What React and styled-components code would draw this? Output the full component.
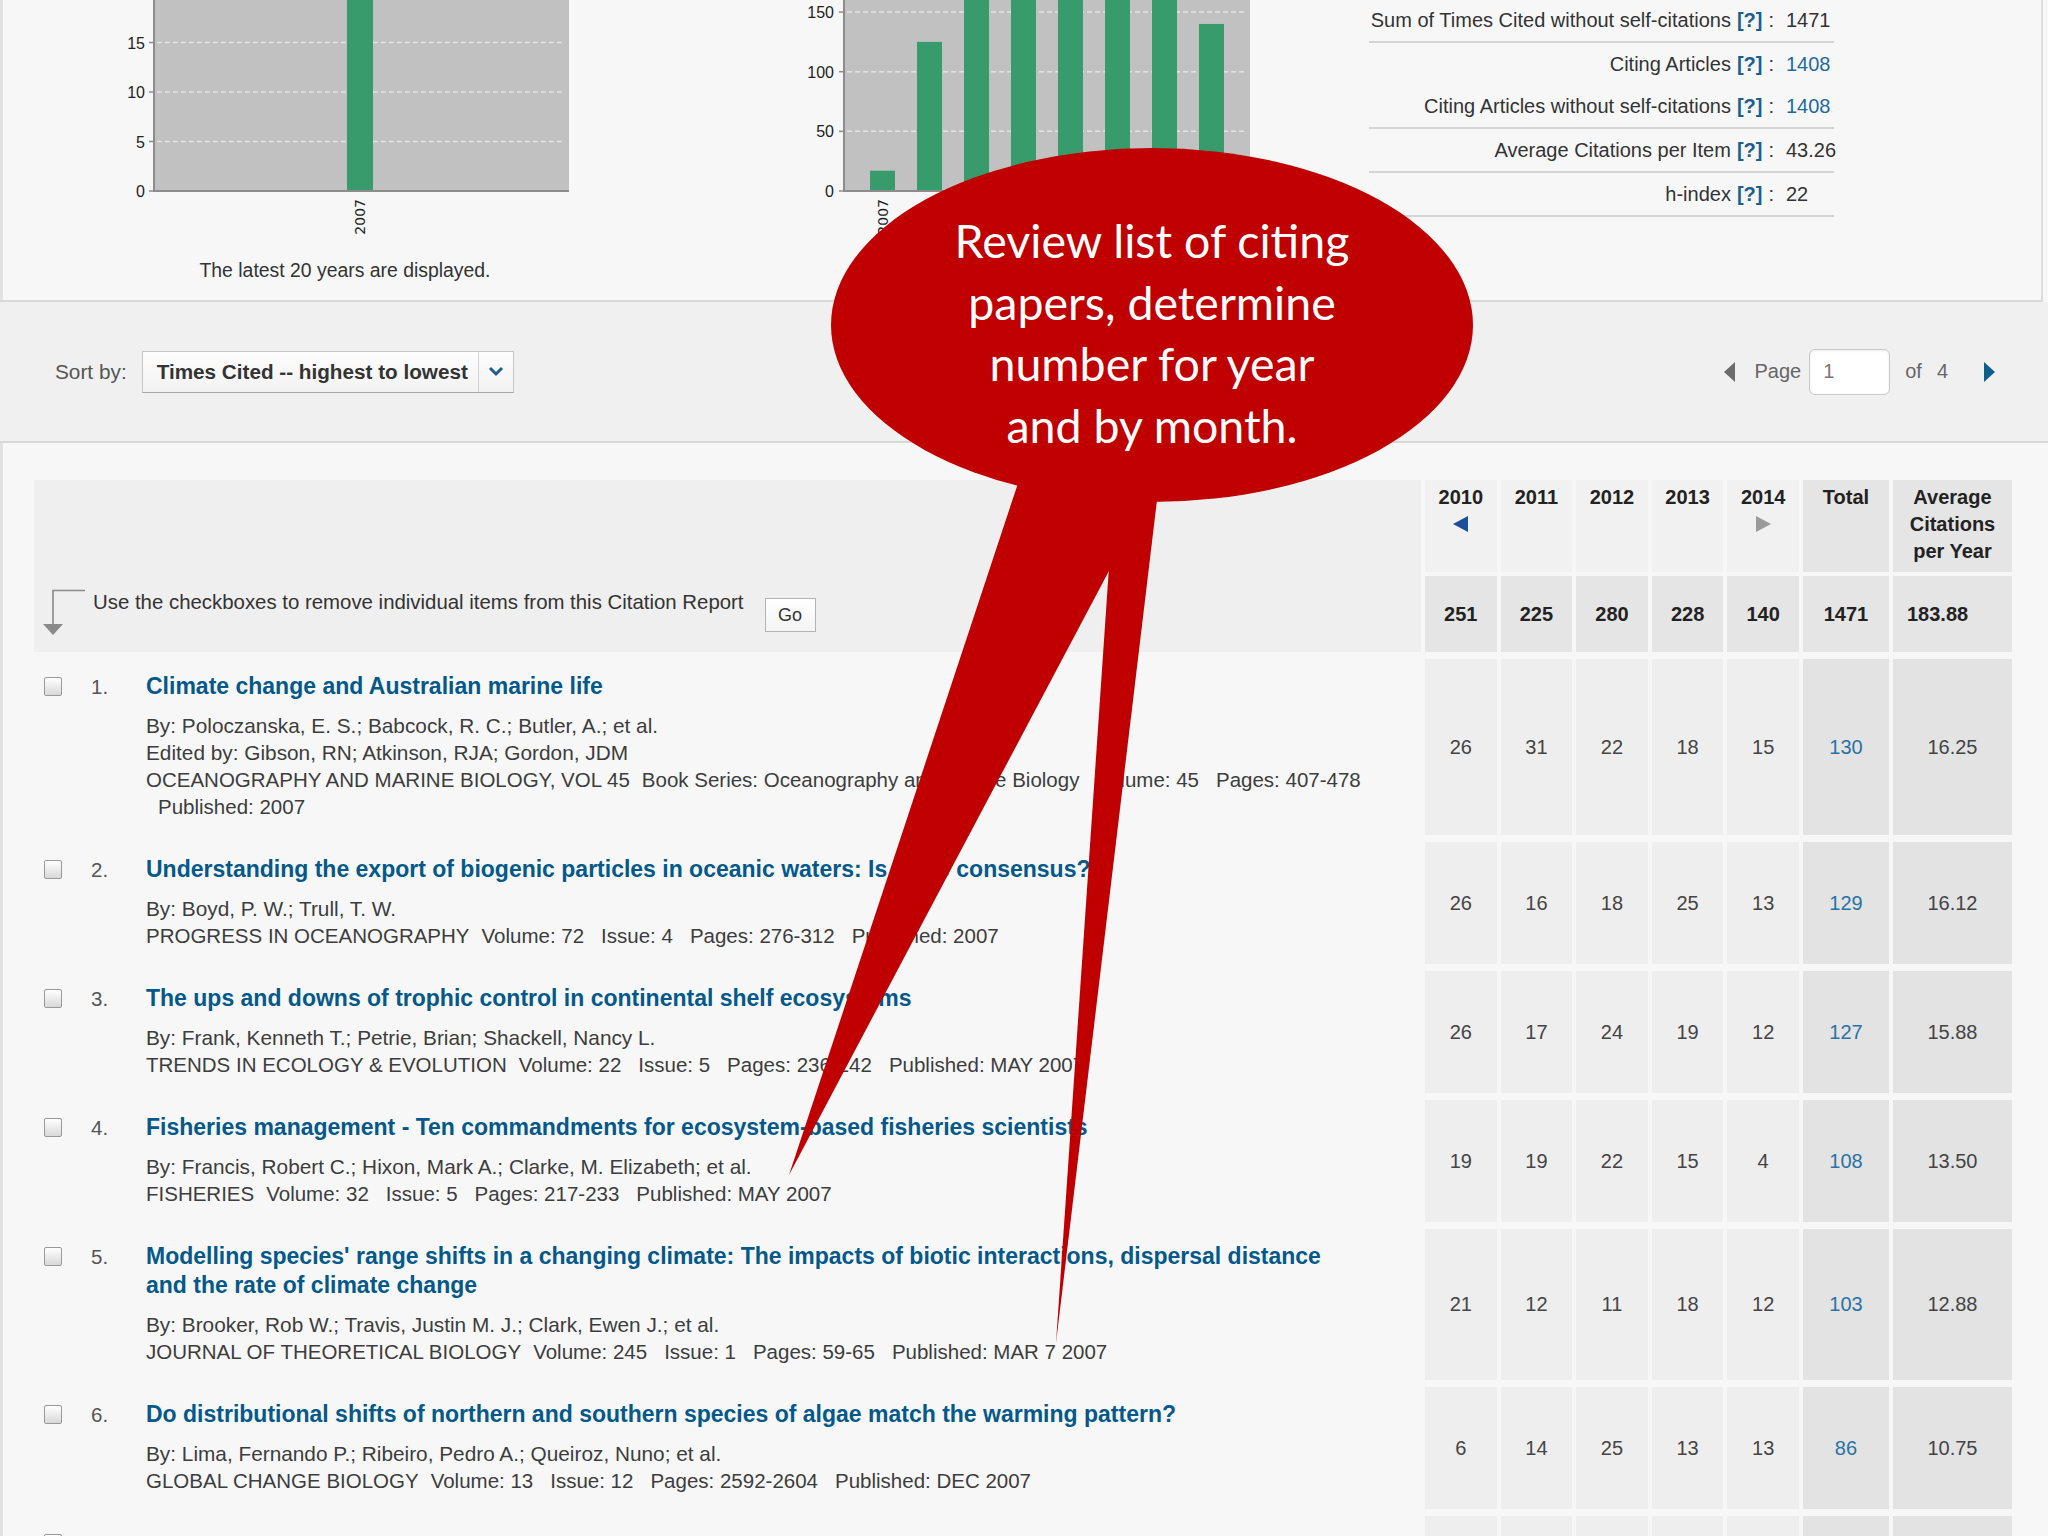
import React from "react";
import styled, { createGlobalStyle } from "styled-components";

const FONT = `"Liberation Sans", Arial, Helvetica, sans-serif`;

const GlobalStyle = createGlobalStyle`
  html, body { margin: 0; padding: 0; }
  body { background: #f7f7f8; font-family: ${FONT}; color: #3d3d3d; }
  * { box-sizing: border-box; }
`;

const Page = styled.div`
  position: relative;
  width: 2048px;
  height: 1536px;
  overflow: hidden;
  background: #f7f7f8;
  box-shadow: inset 3px 0 0 #e2e2e2;
`;

/* ---------- top panel ---------- */
const TopPanel = styled.section`
  display: flex;
  height: 302px;
  margin-right: 5px;
  border-bottom: 2px solid #d8d8d8;
  border-right: 2px solid #dcdcdc;
`;

const ChartBlock = styled.div`
  display: flex;
  flex-direction: column;
  width: ${(p) => p.$w}px;
  flex: none;
`;

const ChartSvg = styled.svg`
  display: block;
  overflow: hidden;
`;

const Caption = styled.div`
  width: 690px;
  margin-top: 5px;
  text-align: center;
  font-size: 19.4px;
  line-height: 30px;
  color: #333;
`;

const Stats = styled.div`
  width: 465px;
  margin-left: 29px;
  margin-top: -1px;
  flex: none;
`;

const StatGroup = styled.div`
  border-bottom: 2px solid #d4d4d4;
`;

const StatRow = styled.div`
  display: flex;
  align-items: center;
  justify-content: flex-end;
  height: 42px;
  font-size: 20px;
  color: #333;
  white-space: nowrap;
`;

const Help = styled.span`
  margin-left: 6px;
  font-weight: 700;
  color: #1b5f8e;
`;

const Colon = styled.span`
  margin-left: 6px;
`;

const StatValue = styled.span`
  width: 48px;
  margin-left: 12px;
  color: ${(p) => (p.$link ? "#1d6aa0" : "#333")};
`;

/* ---------- sort band ---------- */
const SortBand = styled.div`
  display: flex;
  align-items: center;
  height: 141px;
  padding: 0 53px 0 55px;
  background: #f0f0f1;
  border-bottom: 2px solid #d8d8d8;
`;

const SortLabel = styled.span`
  font-size: 20.8px;
  color: #555;
  margin-right: 15px;
`;

const Select = styled.div`
  display: flex;
  width: 372px;
  height: 42px;
  border: 1px solid #c6c6c6;
  border-bottom-color: #a9a9a9;
  background: linear-gradient(#fdfdfd, #f2f2f2);
`;

const SelectValue = styled.span`
  flex: 1;
  padding-left: 14px;
  font-size: 20.7px;
  font-weight: 700;
  line-height: 40px;
  color: #333;
  white-space: nowrap;
`;

const SelectButton = styled.span`
  display: flex;
  align-items: center;
  justify-content: center;
  width: 35px;
  border-left: 1px solid #d2d2d2;
`;

const Pager = styled.div`
  display: flex;
  align-items: center;
  margin-left: auto;
  font-size: 20px;
  color: #666;
`;

const Tri = styled.span`
  width: 0;
  height: 0;
  border-top: 10px solid transparent;
  border-bottom: 10px solid transparent;
  ${(p) =>
    p.$dir === "left"
      ? `border-right: 11px solid ${p.$color};`
      : `border-left: 11px solid ${p.$color};`}
  margin-left: ${(p) => p.$ml || 0}px;
`;

const PagerText = styled.span`
  margin-left: ${(p) => p.$ml}px;
`;

const PageInput = styled.input`
  margin-left: 8px;
  width: 81px;
  height: 46px;
  padding: 0 0 0 13px;
  border: 1px solid #c9c9c9;
  border-radius: 6px;
  background: #fff;
  box-shadow: inset 0 1px 3px rgba(0, 0, 0, 0.08);
  font-family: ${FONT};
  font-size: 20px;
  color: #777;
  outline: none;
`;

/* ---------- table ---------- */
const TableSection = styled.div`
  padding: 37px 0 0 34px;
`;

const COLS = "1387px repeat(5, 71.6px) 86px 119px";

const HeaderGrid = styled.div`
  display: grid;
  grid-template-columns: ${COLS};
  grid-template-rows: 92px 76px;
  gap: 4px;
`;

const HeaderLead = styled.div`
  grid-row: 1 / span 2;
  display: flex;
  align-items: flex-start;
  padding: 109px 0 0 8px;
  background: #efefef;
`;

const LeadText = styled.span`
  margin-left: 7px;
  font-size: 20.4px;
  line-height: 26px;
  color: #333;
  white-space: nowrap;
`;

const GoButton = styled.button`
  margin: 9px 0 0 21px;
  width: 51px;
  height: 34px;
  padding: 0;
  border: 1px solid #b3b3b3;
  background: linear-gradient(#ffffff, #f4f4f4);
  font-family: ${FONT};
  font-size: 18px;
  color: #333;
`;

const HeadCell = styled.div`
  display: flex;
  flex-direction: column;
  align-items: center;
  padding-top: 4px;
  background: ${(p) => (p.$dark ? "#e5e5e5" : "#f1f1f1")};
  font-size: 20px;
  font-weight: 700;
  line-height: 27px;
  color: #222;
  text-align: center;
`;

const HeadArrow = styled.span`
  margin-top: 5px;
  width: 0;
  height: 0;
  border-top: 8px solid transparent;
  border-bottom: 8px solid transparent;
  ${(p) =>
    p.$dir === "left"
      ? `border-right: 15px solid #1a4f9c;`
      : `border-left: 15px solid #9a9a9a;`}
`;

const TotalCell = styled.div`
  display: flex;
  align-items: center;
  justify-content: ${(p) => (p.$left ? "flex-start" : "center")};
  padding-left: ${(p) => (p.$left ? "14px" : "0")};
  background: #e5e5e5;
  font-size: 20px;
  font-weight: 700;
  color: #222;
`;

const Rows = styled.div`
  display: flex;
  flex-direction: column;
  gap: 7px;
  margin-top: 7px;
`;

const Row = styled.div`
  display: grid;
  grid-template-columns: ${COLS};
  column-gap: 4px;
`;

const Item = styled.div`
  display: flex;
  align-items: flex-start;
  padding: 13px 70px 15px 10px;
`;

const Check = styled.span`
  flex: none;
  width: 18px;
  height: 19px;
  margin-top: 5px;
  border: 1px solid #999;
  border-radius: 2px;
  background: linear-gradient(#ffffff, #d8d8d8);
`;

const Num = styled.span`
  flex: none;
  width: 55px;
  margin-left: 29px;
  font-size: 20.5px;
  line-height: 29px;
  color: #555;
`;

const ItemBody = styled.div`
  flex: 1;
  min-width: 0;
`;

const Title = styled.a`
  display: block;
  margin-bottom: 11px;
  font-size: 23px;
  font-weight: 700;
  line-height: 29px;
  color: #04598a;
  text-decoration: none;
`;

const Line = styled.div`
  padding-left: ${(p) => (p.$indent ? "12px" : "0")};
  font-size: ${(p) => (p.$source ? "20.5px" : "20.8px")};
  line-height: 27px;
  color: #3d3d3d;
  white-space: nowrap;
`;

const Field = styled.span`
  & + & {
    margin-left: 17px;
  }
  &:nth-child(2) {
    margin-left: 12px;
  }
`;

const Cell = styled.div`
  display: flex;
  align-items: center;
  justify-content: center;
  background: ${(p) => (p.$dark ? "#e3e3e3" : "#eeeeee")};
  font-size: 20px;
  color: ${(p) => (p.$link ? "#2a72a6" : "#444")};
`;

/* ---------- callout overlay ---------- */
const Overlay = styled.div`
  position: absolute;
  inset: 0;
  pointer-events: none;
  z-index: 10;
`;

const OverlaySvg = styled.svg`
  position: absolute;
  left: 0;
  top: 0;
`;

const CalloutText = styled.div`
  position: absolute;
  left: 831px;
  top: 210px;
  width: 642px;
  font-family: Lato, "Open Sans", sans-serif;
  font-size: 46.5px;
  line-height: 61.5px;
  color: #ffffff;
  text-align: center;
`;

/* ---------- data ---------- */
function BarChart({ width, left, right, zero, unit, ticks, bars, barW, labelGap }) {
  return (
    <ChartSvg width={width} height={250} viewBox={`0 0 ${width} 250`}>
      <rect x={left} y={-20} width={right - left} height={zero + 20} fill="#c1c1c1" />
      {ticks
        .filter((t) => t > 0)
        .map((t) => {
          const y = zero - t * unit;
          return (
            <line key={t} x1={left + 3} x2={right - 4} y1={y} y2={y} stroke="#e3e3e3" strokeWidth="1.5" strokeDasharray="5 3" />
          );
        })}
      {bars.map((b) => (
        <rect key={b.year} x={b.x} y={zero - b.v * unit} width={barW} height={b.v * unit} fill="#379b6c" />
      ))}
      <line x1={left} x2={left} y1={-20} y2={zero + 1} stroke="#8c8c8c" strokeWidth="2" />
      <line x1={left} x2={right} y1={zero} y2={zero} stroke="#8c8c8c" strokeWidth="2" />
      {ticks.map((t) => {
        const y = zero - t * unit;
        return (
          <g key={"t" + t}>
            <line x1={left - 5} x2={left} y1={y} y2={y} stroke="#8c8c8c" strokeWidth="1.5" />
            {y > 8 && (
              <text x={left - labelGap} y={y + 6} textAnchor="end" fontSize="16" fontFamily={FONT} fill="#222">
                {t}
              </text>
            )}
          </g>
        );
      })}
      {bars.map((b) => (
        <text
          key={"y" + b.year}
          transform={`translate(${b.x + barW / 2 + 5} 199) rotate(-90)`}
          textAnchor="end"
          fontSize="14"
          fontFamily={`"DejaVu Sans", sans-serif`}
          fill="#222"
        >
          {b.year}
        </text>
      ))}
    </ChartSvg>
  );
}

const chart2Values = [17, 125, 205, 251, 225, 280, 228, 140];
const chart2Bars = chart2Values.map((v, i) => ({ year: 2007 + i, v, x: 170 + i * 47 }));

const statGroups = [
  [{ label: "Sum of Times Cited without self-citations", value: "1471" }],
  [
    { label: "Citing Articles", value: "1408", link: true },
    { label: "Citing Articles without self-citations", value: "1408", link: true },
  ],
  [{ label: "Average Citations per Item", value: "43.26" }],
  [{ label: "h-index", value: "22" }],
];

const items = [
  {
    n: 1,
    title: "Climate change and Australian marine life",
    lines: [
      "By: Poloczanska, E. S.; Babcock, R. C.; Butler, A.; et al.",
      "Edited by: Gibson, RN; Atkinson, RJA; Gordon, JDM",
    ],
    source: [
      ["OCEANOGRAPHY AND MARINE BIOLOGY, VOL 45", "Book Series: Oceanography and Marine Biology", "Volume: 45", "Pages: 407-478"],
    ],
    extra: "Published: 2007",
    counts: [26, 31, 22, 18, 15],
    total: 130,
    avg: "16.25",
  },
  {
    n: 2,
    title: "Understanding the export of biogenic particles in oceanic waters: Is there consensus?",
    lines: ["By: Boyd, P. W.; Trull, T. W."],
    source: [["PROGRESS IN OCEANOGRAPHY", "Volume: 72", "Issue: 4", "Pages: 276-312", "Published: 2007"]],
    counts: [26, 16, 18, 25, 13],
    total: 129,
    avg: "16.12",
  },
  {
    n: 3,
    title: "The ups and downs of trophic control in continental shelf ecosystems",
    lines: ["By: Frank, Kenneth T.; Petrie, Brian; Shackell, Nancy L."],
    source: [["TRENDS IN ECOLOGY & EVOLUTION", "Volume: 22", "Issue: 5", "Pages: 236-242", "Published: MAY 2007"]],
    counts: [26, 17, 24, 19, 12],
    total: 127,
    avg: "15.88",
  },
  {
    n: 4,
    title: "Fisheries management - Ten commandments for ecosystem-based fisheries scientists",
    lines: ["By: Francis, Robert C.; Hixon, Mark A.; Clarke, M. Elizabeth; et al."],
    source: [["FISHERIES", "Volume: 32", "Issue: 5", "Pages: 217-233", "Published: MAY 2007"]],
    counts: [19, 19, 22, 15, 4],
    total: 108,
    avg: "13.50",
  },
  {
    n: 5,
    title:
      "Modelling species' range shifts in a changing climate: The impacts of biotic interactions, dispersal distance and the rate of climate change",
    lines: ["By: Brooker, Rob W.; Travis, Justin M. J.; Clark, Ewen J.; et al."],
    source: [["JOURNAL OF THEORETICAL BIOLOGY", "Volume: 245", "Issue: 1", "Pages: 59-65", "Published: MAR 7 2007"]],
    counts: [21, 12, 11, 18, 12],
    total: 103,
    avg: "12.88",
  },
  {
    n: 6,
    title: "Do distributional shifts of northern and southern species of algae match the warming pattern?",
    lines: ["By: Lima, Fernando P.; Ribeiro, Pedro A.; Queiroz, Nuno; et al."],
    source: [["GLOBAL CHANGE BIOLOGY", "Volume: 13", "Issue: 12", "Pages: 2592-2604", "Published: DEC 2007"]],
    counts: [6, 14, 25, 13, 13],
    total: 86,
    avg: "10.75",
  },
  {
    n: 7,
    title: "\u00a0",
    lines: ["\u00a0"],
    source: [["\u00a0"]],
    counts: ["", "", "", "", ""],
    total: "",
    avg: "",
  },
];

const years = [2010, 2011, 2012, 2013, 2014];
const totals = [251, 225, 280, 228, 140];

function DownArrow() {
  return (
    <svg width="44" height="48" viewBox="0 0 44 48">
      <path d="M43 1.5 H11 V36" fill="none" stroke="#8a8a8a" strokeWidth="1.6" />
      <polygon points="1,35 21,35 11,46" fill="#8a8a8a" />
    </svg>
  );
}

function Chevron() {
  return (
    <svg width="16" height="11" viewBox="0 0 16 11">
      <path d="M2 2 L8 8 L14 2" fill="none" stroke="#1c5f8e" strokeWidth="3" />
    </svg>
  );
}

export default function App() {
  return (
    <Page>
      <GlobalStyle />
      <TopPanel>
        <ChartBlock $w={700}>
          <BarChart
            width={700}
            left={154}
            right={569}
            zero={191}
            unit={9.9}
            ticks={[0, 5, 10, 15, 20]}
            bars={[{ year: 2007, v: 22, x: 347 }]}
            barW={26}
            labelGap={9}
          />
          <Caption>The latest 20 years are displayed.</Caption>
        </ChartBlock>
        <ChartBlock $w={640}>
          <BarChart
            width={640}
            left={144}
            right={550}
            zero={191}
            unit={1.193}
            ticks={[0, 50, 100, 150]}
            bars={chart2Bars}
            barW={25}
            labelGap={10}
          />
        </ChartBlock>
        <Stats>
          {statGroups.map((g, gi) => (
            <StatGroup key={gi}>
              {g.map((s) => (
                <StatRow key={s.label}>
                  <span>{s.label}</span>
                  <Help>[?]</Help>
                  <Colon>:</Colon>
                  <StatValue $link={s.link}>{s.value}</StatValue>
                </StatRow>
              ))}
            </StatGroup>
          ))}
        </Stats>
      </TopPanel>

      <SortBand>
        <SortLabel>Sort by:</SortLabel>
        <Select>
          <SelectValue>Times Cited -- highest to lowest</SelectValue>
          <SelectButton>
            <Chevron />
          </SelectButton>
        </Select>
        <Pager>
          <Tri $dir="left" $color="#6b6b6b" />
          <PagerText $ml={19}>Page</PagerText>
          <PageInput readOnly value="1" />
          <PagerText $ml={15}>of</PagerText>
          <PagerText $ml={15}>4</PagerText>
          <Tri $dir="right" $color="#0d5e8c" $ml={36} />
        </Pager>
      </SortBand>

      <TableSection>
        <HeaderGrid>
          <HeaderLead>
            <DownArrow />
            <LeadText>Use the checkboxes to remove individual items from this Citation Report</LeadText>
            <GoButton>Go</GoButton>
          </HeaderLead>
          {years.map((y, i) => (
            <HeadCell key={y}>
              {y}
              {i === 0 && <HeadArrow $dir="left" />}
              {i === 4 && <HeadArrow $dir="right" />}
            </HeadCell>
          ))}
          <HeadCell $dark>Total</HeadCell>
          <HeadCell $dark>
            Average
            <br />
            Citations
            <br />
            per Year
          </HeadCell>
          {totals.map((t, i) => (
            <TotalCell key={i}>{t}</TotalCell>
          ))}
          <TotalCell>1471</TotalCell>
          <TotalCell $left>183.88</TotalCell>
        </HeaderGrid>

        <Rows>
          {items.map((it) => (
            <Row key={it.n}>
              <Item>
                <Check />
                <Num>{it.n}.</Num>
                <ItemBody>
                  <Title href="#">{it.title}</Title>
                  {it.lines.map((l, i) => (
                    <Line key={i}>{l}</Line>
                  ))}
                  {it.source.map((fields, i) => (
                    <Line key={"s" + i} $source>
                      {fields.map((f) => (
                        <Field key={f}>{f}</Field>
                      ))}
                    </Line>
                  ))}
                  {it.extra && (
                    <Line $indent $source>
                      {it.extra}
                    </Line>
                  )}
                </ItemBody>
              </Item>
              {it.counts.map((c, i) => (
                <Cell key={i}>{c}</Cell>
              ))}
              <Cell $dark $link>
                {it.total}
              </Cell>
              <Cell $dark>{it.avg}</Cell>
            </Row>
          ))}
        </Rows>
      </TableSection>

      <Overlay>
        <OverlaySvg width="2048" height="1536" viewBox="0 0 2048 1536">
          <ellipse cx="1152" cy="325" rx="321" ry="177" fill="#c00000" />
          <polygon points="1029,450 1173,450 789,1175" fill="#c00000" />
          <polygon points="1117,450 1163,450 1056,1343" fill="#c00000" />
        </OverlaySvg>
        <CalloutText>
          Review list of citing
          <br />
          papers, determine
          <br />
          number for year
          <br />
          and by month.
        </CalloutText>
      </Overlay>
    </Page>
  );
}
